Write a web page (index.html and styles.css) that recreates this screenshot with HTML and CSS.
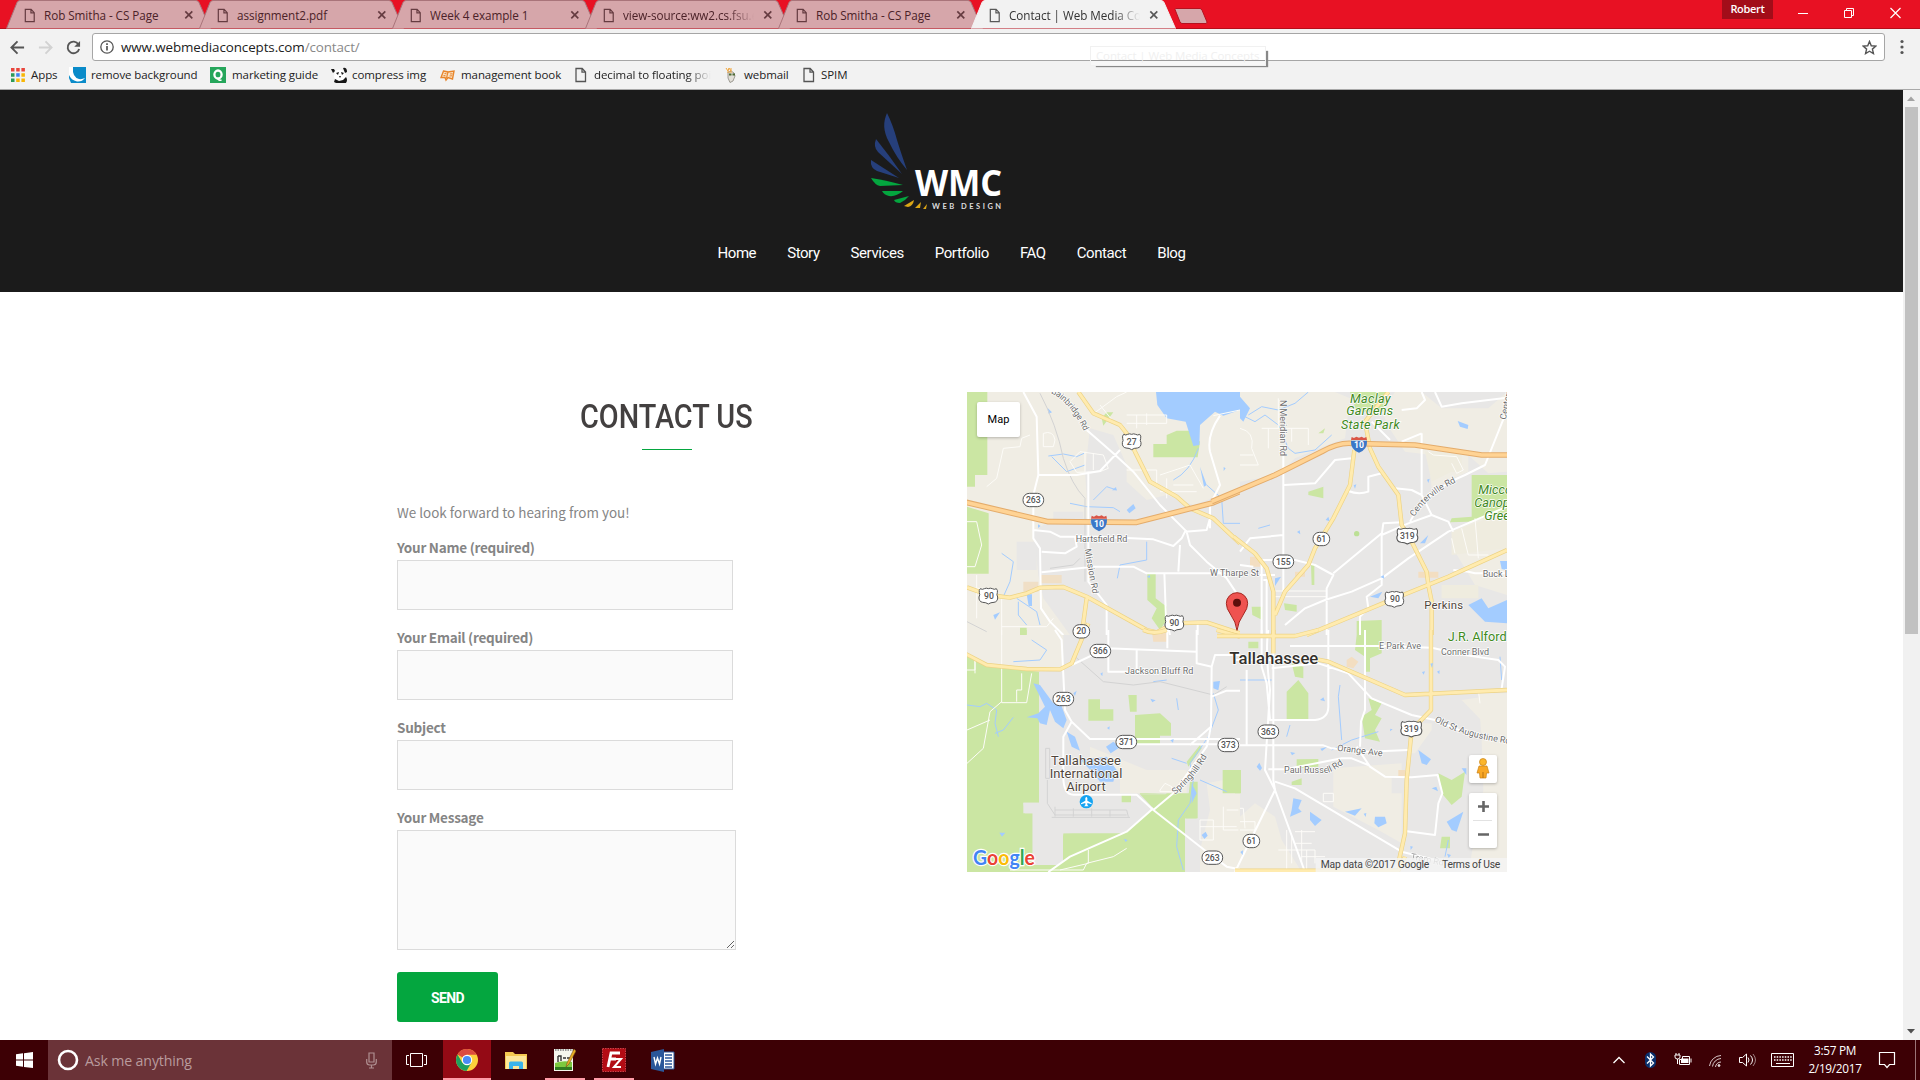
FILE: index.html
```html
<!DOCTYPE html>
<html lang="en">
<head>
<meta charset="utf-8">
<title>Contact | Web Media Concepts</title>
<link rel="stylesheet" href="styles.css">
</head>
<body>
<svg class="defs" width="0" height="0">
  <defs>
    <symbol id="page" viewBox="0 0 12 16"><path d="M1 1.5h6.2L10.5 5v9.5H1zM7 1.5V5.2h3.5" fill="none" stroke="currentColor" stroke-width="1.3"/></symbol>
    <symbol id="close" viewBox="0 0 10 10"><path d="M1.3 1.3l7 7m0-7l-7 7" fill="none" stroke="currentColor" stroke-width="1.7"/></symbol>
    <symbol id="tabshape" viewBox="0 0 206 29"><path d="M.5 28.5L11 2.500Q12 .5 14 .5H190Q192 .5 193 2.500L204.500 28.500" stroke="currentColor"/></symbol>
  </defs>
</svg>
<div class="screen">
  <header class="titlebar">
    <div class="tabs">
      <div class="tab"><svg class="tab-bg"><use href="#tabshape"/></svg><svg class="tab-icon"><use href="#page"/></svg><span class="tab-title">Rob Smitha - CS Page</span><svg class="tab-close"><use href="#close"/></svg></div>
      <div class="tab"><svg class="tab-bg"><use href="#tabshape"/></svg><svg class="tab-icon"><use href="#page"/></svg><span class="tab-title">assignment2.pdf</span><svg class="tab-close"><use href="#close"/></svg></div>
      <div class="tab"><svg class="tab-bg"><use href="#tabshape"/></svg><svg class="tab-icon"><use href="#page"/></svg><span class="tab-title">Week 4 example 1</span><svg class="tab-close"><use href="#close"/></svg></div>
      <div class="tab"><svg class="tab-bg"><use href="#tabshape"/></svg><svg class="tab-icon"><use href="#page"/></svg><span class="tab-title fade">view-source:ww2.cs.fsu.edu</span><svg class="tab-close"><use href="#close"/></svg></div>
      <div class="tab"><svg class="tab-bg"><use href="#tabshape"/></svg><svg class="tab-icon"><use href="#page"/></svg><span class="tab-title">Rob Smitha - CS Page</span><svg class="tab-close"><use href="#close"/></svg></div>
      <div class="tab active"><svg class="tab-bg"><use href="#tabshape"/></svg><svg class="tab-icon"><use href="#page"/></svg><span class="tab-title fade">Contact | Web Media Concepts</span><svg class="tab-close"><use href="#close"/></svg></div>
      <svg class="new-tab" viewBox="0 0 34 16"><path d="M1 1.500Q1 .5 2 .5H26Q27 .5 28 2l5 12q0 1.500-1 1.500H8Q7 15.500 6 14z" fill="#d6a6aa" stroke="#b5121f"/></svg>
    </div>
    <div class="window-controls">
      <span class="profile">Robert</span>
      <svg width="12" height="12" viewBox="0 0 12 12"><path d="M0 6.500h10" stroke="#fff"/></svg>
      <svg width="12" height="12" viewBox="0 0 12 12"><path d="M.5 3.500h7v7h-7zM2.500 3V1.500h7v7H8" fill="none" stroke="#fff"/></svg>
      <svg width="12" height="12" viewBox="0 0 12 12"><path d="M.5 1l10 10m0-10l-10 10" stroke="#fff" stroke-width="1.200"/></svg>
    </div>
  </header>
  <div class="toolbar">
    <svg class="nav-icon" viewBox="0 0 16 16"><path d="M15 8H2M8 1.500L1.500 8 8 14.500" fill="none" stroke="#555" stroke-width="2"/></svg>
    <svg class="nav-icon" viewBox="0 0 16 16"><path d="M1 8h13M8 1.500L14.500 8 8 14.500" fill="none" stroke="#d2d2d2" stroke-width="2"/></svg>
    <svg class="nav-icon" viewBox="0 0 16 16"><path d="M13.200 4.500A6.200 6.200 0 1 0 14 9.500" fill="none" stroke="#555" stroke-width="2"/><path d="M15 1v6.200H8.800z" fill="#555"/></svg>
    <div class="omnibox">
      <svg width="14" height="14" viewBox="0 0 14 14"><circle cx="7" cy="7" r="6.200" fill="none" stroke="#555" stroke-width="1.300"/><path d="M7 6v4.500M7 3.300v1.600" stroke="#555" stroke-width="1.700"/></svg>
      <span class="url">www.webmediaconcepts.com<span>/contact/</span></span>
      <svg class="star" width="15" height="15" viewBox="0 0 16 16"><path d="M8 1.500l1.900 4.600 4.900.4-3.700 3.200 1.100 4.800L8 12l-4.200 2.500 1.100-4.800L1.200 6.500l4.900-.4z" fill="none" stroke="#555" stroke-width="1.500"/></svg>
    </div>
    <svg class="dots" width="4" height="16" viewBox="0 0 4 16"><g fill="#555"><circle cx="2" cy="2.500" r="1.600"/><circle cx="2" cy="8" r="1.600"/><circle cx="2" cy="13.500" r="1.600"/></g></svg>
    <div class="tooltip">Contact | Web Media Concepts</div>
  </div>
  <nav class="bookmarks">
    <span class="bm bm-apps"><svg width="14" height="14" viewBox="0 0 14 14"><path d="M0 0h3.500v3.500H0zM5.200 0h3.500v3.500H5.200zM10.400 0h3.500v3.500h-3.500z" fill="#e8453c"/><path d="M0 5.200h3.500v3.500H0zM0 10.400h3.500v3.500H0z" fill="#2d9a57"/><path d="M5.200 5.200h3.500v3.500H5.200z" fill="#3e82f1"/><path d="M10.400 5.200h3.500v3.500h-3.500zM5.200 10.400h3.500v3.500H5.200zM10.400 10.400h3.500v3.500h-3.500z" fill="#f8b605"/></svg>Apps</span>
    <span class="bm bm-remove"><svg width="17" height="16" viewBox="0 0 17 16"><path d="M0 0h17v16H2L0 11z" fill="#0a8bc9"/><path d="M0 0H4Q3 10 10 12 13 12.500 16 11 13 15 8 14.500 2 13 0 8z" fill="#fff"/></svg>remove background</span>
    <span class="bm bm-guide"><svg width="16" height="16" viewBox="0 0 16 16"><path d="M0 0h16v16H0z" fill="#26a65b"/><ellipse cx="8" cy="7.500" rx="3.600" ry="4" fill="none" stroke="#fff" stroke-width="2.300"/><path d="M7.500 11q1 3 4 2" fill="none" stroke="#fff" stroke-width="1.600"/></svg>marketing guide</span>
    <span class="bm bm-compress"><svg width="17" height="16" viewBox="0 0 17 16"><path d="M4 4q4-3 9 0l2 5-2 5-7 1-3-5z" fill="#fff"/><path d="M0 2l3 0 1 2-2 2zM12 1q4-1 4 4l-2 1zM5 6l3-1-1 3zM10 5l3 1-2 2zM8 9h2l-1 2zM3 15l1-3 4 2 4-1 3-3q2 3 0 6H5z" fill="#171717"/></svg>compress img</span>
    <span class="bm bm-book"><svg width="15" height="15" viewBox="0 0 15 15"><path d="M3.500 3l4.500 1 6-1-1.500 8-4.500-1.500L6 12l-1-2.500H1z" fill="#fbe3c6" stroke="#e8862c" stroke-width="1.400"/><path d="M8 4L6.500 10M10 6l2.500-.3M9.500 8l2.500-.2M4.500 5.500l2 .3M3.500 7.500l2 .2" stroke="#e8862c" stroke-width="1.100"/></svg>management book</span>
    <span class="bm bm-decimal"><svg width="12" height="16"><use href="#page"/></svg><span class="fade">decimal to floating point</span></span>
    <span class="bm bm-mail"><svg width="12" height="16" viewBox="0 0 12 16"><path d="M3 5q4-2 6 1l1 3-2 5-3 1.500L3 11z" fill="#e2dfd8" stroke="#8a867e" stroke-width=".8"/><path d="M1 1l2 3 1-3 2 3V1M2 5h5" stroke="#f0a53a" fill="none"/><path d="M4 7.500h2.500m1 0H10" stroke="#4d6a34" stroke-width="1.800"/></svg>webmail</span>
    <span class="bm bm-spim"><svg width="12" height="16"><use href="#page"/></svg>SPIM</span>
  </nav>

  <div class="viewport">
    <main class="site">
      <div class="site-header">
        <svg class="logo" width="132" height="100" viewBox="0 0 132 100" role="img" aria-label="WMC Web Design">
          <g fill="#263f7b"><path d="M16 0C12 9 12 18 18 29Q25 44 36 57 30 40 26 27 22 12 16 0z"/><path d="M5 26Q2 34 7 39L31 61Q18 42 5 26z"/><path d="M0 47Q-1 55 6 58L28 65 0 47z"/></g>
          <g fill="#04a63f"><path d="M0 65Q4 72 9 73L32 72Q14 67 0 65z"/><path d="M11 78H32Q25 84 18 83 13 82 11 78z"/><path d="M23 87L38 83Q34 88 29 90 24 90 23 87z"/></g>
          <g fill="#dba616"><path d="M33 93L43 87Q42 93 37 94z"/><path d="M44 95L50 89 49 95z"/><path d="M52 96L56 91 55 96z"/></g>
          <text x="44" y="83" class="logo-name" textLength="87" lengthAdjust="spacingAndGlyphs">WMC</text>
          <text x="61" y="96" class="logo-sub" textLength="69">WEB DESIGN</text>
        </svg>
        <nav class="menu"><a>Home</a><a>Story</a><a>Services</a><a>Portfolio</a><a>FAQ</a><a>Contact</a><a>Blog</a></nav>
      </div>
      <div class="columns">
        <section class="contact">
          <h1><span>CONTACT US</span></h1>
          <p>We look forward to hearing from you!</p>
          <form>
            <label>Your Name (required)<input type="text"></label>
            <label>Your Email (required)<input type="text"></label>
            <label>Subject<input type="text"></label>
            <label>Your Message<textarea></textarea></label>
            <button type="button">SEND</button>
          </form>
        </section>
        <section class="map">
          <svg class="map-canvas" width="540" height="480" viewBox="0 0 1620 1440">
            <defs>
              <clipPath id="cnw"><path d="M0 0H840V750H0z"/></clipPath>
              <g id="us"><path d="M-24-22q6 4 12 0 6-3 12 0 6-3 12 0 6 4 12 0 5 5 3 12-3 6 1 13 1 14-11 16-10 0-17 5-7-5-17-5-12-2-11-16 4-7 1-13-2-7 3-12z" fill="#fff" stroke="#555" stroke-width="3"/></g>
              <g id="us3"><use href="#us" transform="scale(1.120 1)"/></g>
              <rect id="st" x="-31" y="-20" width="62" height="40" rx="19" fill="#fff" stroke="#555" stroke-width="3"/>
              <rect id="st2" x="-25" y="-20" width="50" height="40" rx="19" fill="#fff" stroke="#555" stroke-width="3"/>
              <g id="i10"><path d="M-24-11Q-26 15 0 25 26 15 24-11z" fill="#3a77c8"/><path d="M-22-22l7 3 7-4 8 3 8-3 7 4 7-3 2 9h-48z" fill="#da5546"/><text y="12" text-anchor="middle" class="shield white">10</text></g>
              <path id="tBain" d="M272 24Q335 52 382 160"/>
              <path id="tCen" d="M538 396Q580 330 670 288"/>
              <path id="tAug" d="M598 274Q690 325 830 342"/>
              <path id="tPaul" d="M147 428H280Q295 425 345 388"/>
              <path id="tSpr" d="M645 494Q710 440 745 372"/>
            </defs>
            <rect width="1620" height="1440" fill="#e8e7e6"/>

            <!-- north-west quarter -->
            <g transform="translate(-21 -21)" clip-path="url(#cnw)">
              <path d="M21 21H840V310L700 360 620 330 560 345 500 290V240L460 150 390 130 375 260 385 400H280L220 440 235 570 250 640 330 750H21z" fill="#f0ede4"/>
              <path d="M170 470h60v85h-60zM280 380h90v40h-90z" fill="#e8e7e6"/>
              <path d="M21 21H82V270H45V305H21zM21 365L86 385V566H21zM580 177H620V150L650 137H690L720 170 713 217H580zM562 563H587V640L620 665V705L600 735 575 700 590 670 562 645zM425 100L440 82H460L430 122zM180 728h20v22h-20z" fill="#cbe6a3"/>
              <path d="M588 21H840V75L790 92 765 80 720 120 718 180 700 183 677 110 620 100 592 60zM720 245L740 300 732 305zM500 375L520 357 527 370 508 385zM200 628h16v35h-10zM262 68l14 14-10 4zM100 690l20-8-15 22z" fill="#a3ccff"/>
              <g class="stream"><path d="M715 190Q690 260 640 285M740 300L785 340 790 415H840M265 213L310 207 350 215 372 205M275 215L320 260 375 240M330 355L380 365 460 368 480 380M400 345L440 305 470 315M560 470V525L480 540 472 580M125 505L160 530 150 590 130 635M170 640L230 680 240 720M175 650V690L200 720"/></g>
              <path d="M240 570h65v25h-65zM190 590h45v30h-45z" fill="#f0dfc6"/>
              <path d="M240 25Q290 120 310 220 335 300 375 340V590M270 550L340 540 360 520M21 710L80 740" class="rail"/>
              <path d="M840 75L760 92M330 230L360 200 430 210 445 250 420 260 350 262 330 230M375 200V260M400 205V255M250 145q30-10 35 20l-5 20h-30zM395 90L470 35 500 21M420 60L460 110M500 90h120v25h-120M530 90v40M560 85v35M600 270L690 240 730 310M500 255h90v40M620 280V340M21 410L50 410 65 480 45 545 21 545M130 190L180 185 185 160 210 150M130 190L110 280 80 305M50 570V700M21 610H75M125 640V750M125 725H260L280 700M640 300h60M600 320h110" class="minor"/>
              <path d="M190 21L230 95 235 270 220 330V460L240 490 243 670 270 710 310 750M235 270H350L420 258 480 195M385 260V590L440 660V750M380 135L460 205 520 260 600 360 680 440 690 480 740 530 800 580 840 640M220 435L270 440 300 455H420L580 463 640 483 665 460 675 440 740 435 750 400M780 92Q740 150 750 200L780 300 750 360V430M245 500L315 505 350 485 345 455M245 562L400 545H520L560 565H840M660 480L655 560M613 563L618 700 630 750M713 710V750" class="road"/>
              <path d="M355 21L400 85 480 120 500 145 525 200 570 290 650 335 690 370 760 400 840 475M21 607L85 630 150 638 200 625 240 608 310 606 380 635 560 735 590 742 640 715 740 712 840 745M380 640L365 750" class="hwyc"/>
              <path d="M355 21L400 85 480 120 500 145 525 200 570 290 650 335 690 370 760 400 840 475M21 607L85 630 150 638 200 625 240 608 310 606 380 635 560 735 590 742 640 715 740 712 840 745M380 640L365 750" class="hwy"/>
              <path d="M10 350L265 410 530 412 760 353 850 315" class="intc"/><path d="M10 350L265 410 530 412 760 353 850 315" class="int"/>
            </g>

            <!-- north-east quarter -->
            <g transform="translate(804 -21)">
              <path d="M15 21H300L345 40 330 160 290 175 180 220 130 270 15 290zM480 21H560L620 70H760L816 21V260L760 265 700 210H590L510 200 470 140 440 80zM580 200H700V260L590 310zM650 440L816 360V630L720 600 660 500z" fill="#f0ede4"/>
              <path d="M570 200H680V265L650 260 590 290zM650 440L760 400 816 385V490L650 510zM620 600h110v40h-110z" fill="#efecdf"/>
              <path d="M345 21H455L445 80H365zM220 320L265 305V340L220 330zM710 270H816V380L700 410 645 412 650 400 710 395zM365 708L440 705V750H365zM228 540h10v60h-8zM147 655L185 660V680L150 675zM50 665h32v40l-30-15zM250 145l20-15-5 15z" fill="#cbe6a3"/>
              <path d="M15 35L45 70 25 110 15 100zM668 108L700 120 698 132 675 125zM700 660L740 640 760 670 816 645V715L750 710zM555 475L580 450 570 475zM120 580L138 575 120 603zM405 635L442 620 430 640zM272 405l8-10 4 14zM795 528h21v28l-16-4z" fill="#a3ccff"/>
              <circle cx="365" cy="446" r="8" fill="#bce095"/>
              <g class="stream"><path d="M30 95L60 110 90 90 130 120 160 190 180 205 240 195 290 150M40 90L80 65 130 75 180 55 220 21M70 430L105 420"/></g>
              <path d="M45 515h30v30h-30zM180 560h30v15h-30zM550 560h60v18h-60z" fill="#f3dec1"/>
              <path d="M15 130Q60 140 50 190L70 240H15M80 130h140v50M100 130v60M130 40v90M170 130v40M580 200l15 10 70 5 20 40-20 10-15-30M15 210h40M680 430L700 510H760M720 400L730 520M650 460L660 505M118 618H275M118 635H275" class="minor"/>
              <path d="M145 200V620M148 300L240 295 300 225 350 220M340 318Q370 330 400 320V275L440 265M15 500L45 460 145 450M75 525H180L240 540 295 570 275 610V750M295 565L440 445V600L395 635 400 670 375 695V750M500 412L445 415 440 450M440 450L520 415 590 390M525 410Q570 320 690 270L750 240 816 75M410 110L465 165M480 310L530 315 560 330 590 390 640 410 655 440M560 145V330M500 75L545 70 570 45 560 21M600 21L620 65 680 55 816 38M500 170L560 145M150 720L210 670 270 645 350 620 440 580 520 520 640 440 816 365M75 570H120M80 530V750M85 585H95V750M15 540L55 545M655 555L700 560 720 565H816" class="road"/>
              <path d="M-4 455L60 505 95 550 115 620V750M358 195L345 300 295 400 240 490 220 540 150 620 120 690M460 21L390 110 405 190 430 245 490 330 500 420 530 470 575 560 580 600 590 650V750M215 750L480 640 640 575 816 495" class="hwyc"/>
              <path d="M-4 455L60 505 95 550 115 620V750M358 195L345 300 295 400 240 490 220 540 150 620 120 690M460 21L390 110 405 190 430 245 490 330 500 420 530 470 575 560 580 600 590 650V750M215 750L480 640 640 575 816 495" class="hwy"/>
              <path d="M-70 350L120 270 260 200Q310 172 350 175L540 180 740 210H816" class="intc"/><path d="M-70 350L120 270 260 200Q310 172 350 175L540 180 740 210H816" class="int"/>
            </g>

            <!-- south-west quarter -->
            <g transform="translate(-21 714)">
              <path d="M21 15H310V120L237 125H21zM390 350L560 420H680V490H480V440L390 420zM740 460L840 440V726H720V660L750 540z" fill="#f0ede4"/>
              <path d="M21 70L80 110 240 125V518H190V550H218V705H300L310 610 500 605 540 490H710V565H675V726H21z" fill="#cbe6a3"/>
              <path d="M237 125V518H190L195 550H218V705H309V610H490L560 560 620 490 540 493H310V125z" fill="#e8e7e6"/>
              <path d="M540 493H710V565H675V726H265L330 680 500 605 580 535z" fill="#cbe6a3"/>
              <path d="M385 208h35v30h40v34h-75zM505 195h25v50h-20zM525 255L600 250 633 280V317H600V343H525zM788 420h52v70h-52zM485 495h28v22h-28zM680 395l40-50 5 10-40 55zM690 455h23v110h-35zM182 0h18v14h-18z" fill="#cbe6a3"/>
              <path d="M220 160L240 165 280 220 300 215 320 270 310 295 285 275 270 240 260 285 240 280 232 265 200 262 235 250 255 230zM320 305L345 320 360 362 335 350zM438 350L460 335 480 352 452 370zM362 390L440 380 470 420 460 455H420L400 430zM340 190l10-8-5 16zM760 155l20-2-5 28-15-6zM695 460L710 490 695 520zM118 608h18l-10 12zM725 615l12-10 6 12-10 10z" fill="#a3ccff"/>
              <g class="stream"><path d="M21 225L60 230 80 220 110 240 105 280 115 320M160 262L130 300 105 310M760 190L775 240 745 320 690 400 700 450 690 520 655 570 650 650 670 720M650 205L655 240M635 385L680 400M215 30L260 60 240 90 160 95M720 450L800 485M580 155L620 150"/></g>
              <path d="M575 0h45v35h-40z" fill="#f3dec1"/>
              <path d="M257 355h12v90h-12zM262 450V520L285 555H500M285 530V560M340 535V560M395 535V560M450 540V560M285 540H500L505 560M275 562H510M340 75L430 155 520 165 600 155 760 195 800 170" class="rail"/>
              <path d="M125 0V218H200L215 130M125 215L90 245 70 355 21 400M90 270L21 300M170 215V180H185V130M21 120H45V85M45 130V90M150 720H370L380 700 460 680 500 655M385 660V700L300 720M600 480l15-20 20 10v15h-35zM720 570h40v60h-40zM790 530v70h45M720 590h110M800 540h35" class="minor"/>
              <path d="M285 0L305 30 315 240 335 275 390 327H840M335 275L310 320V440Q310 493 340 494H530L580 540 740 665 800 710 840 718M580 535L500 605 330 680 265 726M335 105L440 55 710 65V100L755 110 753 290 740 350 640 490 580 540M445 0V125H530V60M622 0V55M710 65V0M753 290L690 345M530 343H840M755 110L765 75H840M755 200L800 182H840M530 125L600 122" class="road"/>
              <path d="M10 68L80 105 200 117 300 118 335 100 385-20M550 0Q580 15 620 0M770 0L840 20" class="hwyc"/><path d="M10 68L80 105 200 117 300 118 335 100 385-20M550 0Q580 15 620 0M770 0L840 20" class="hwy"/>
              <circle cx="379" cy="515" r="20" fill="#15a4f2"/><path d="M379 500l3 4v8l13 8v3l-13-4v6l4 4h-14l4-4v-6l-13 4v-3l13-8v-8z" fill="#fff"/>
            </g>

            <!-- south-east quarter -->
            <g transform="translate(804 714)">
              <path d="M680 210L816 190V726H700L740 560 816 350zM535 280H590V300L540 370H520zM295 415L500 400V440H470V490H500V640L430 600 295 530zM15 560L60 520 120 560 140 630 200 726H15z" fill="#f0ede4"/>
              <path d="M730 190H816V726H700L745 480 740 330z" fill="#f0ede4"/>
              <path d="M365 15H440V70L405 85V125H390V80L360 60zM155 185L190 150 220 190V268H155zM170 100L205 110V145L180 140zM185 388L250 387V410L185 415zM170 455l30-10v20h-30zM400 205L440 220 420 255 440 265 420 300 435 335 390 325 380 260 410 240zM610 430L650 450 690 425 680 500 650 525 620 490zM0 420h18v70H0zM620 620h25v35h-30zM40 35h30v20h-30z" fill="#cbe6a3"/>
              <path d="M550 360L588 388 575 405 560 400zM175 505L200 510 190 535 200 545 165 560 170 540zM225 545L260 570 240 588 225 570zM420 560L450 560 455 580 430 592 418 580zM330 545l50-10-20 22zM635 575l50-30-20 60-15-5zM65 410l8-12 8 16-6 8zM680 415h14v20zM255 210l10-8 5 12zM590 475l14-5 5 14z" fill="#a3ccff"/>
              <g class="stream"><path d="M315 165L310 200 320 330M290 360L350 330 430 305M165 285L155 320M640 630L630 680M15 150H110M795 80L800 150"/></g>
              <path d="M335 90l15-10 20 15-15 20-20-5zM490 420h20v20h-20z" fill="#f3dec1"/>
              <path d="M130 660h110v40M155 600V726M170 620v80M200 600v100M200 680h70M215 660v60M180 605h60M180 640h50M15 535h10l5 60M15 575h45v25H15M265 490h30v25h-30zM730 180L735 220" class="minor"/>
              <path d="M100 0Q90 60 105 180L90 420 120 480 210 726M120 480L0 726M80 0V110L95 160 105 270H240Q280 265 280 230V0M110 115L250 100 340 130 410 205 530 255 600 270 720 320M165 48H440L590 53 690 75 790 90 810 110 800 175M390 0V240L378 275 375 350M0 346H265L290 355 400 365 520 360M100 418H150L320 385 350 385 400 405M365 350L405 410 450 440 530 442 608 435 622 490 610 520 600 615 510 603M120 455L180 475 500 665 600 690M0 90H110M35 120V346" class="road"/>
              <path d="M115 0V450L120 480" class="road"/>
              <path d="M-54 18H180L250 0M115 0V70M245 88L280 95 510 195 816 180M588 0V240L530 300 515 450 510 610 490 700M0 722H490L510 680" class="hwyc"/>
              <path d="M-54 18H180L250 0M115 0V70M245 88L280 95 510 195 816 180M588 0V240L530 300 515 450 510 610 490 700M0 722H490L510 680" class="hwy"/>
            </g>

            <!-- small ponds -->
            <g fill="#a3ccff"><path d="M435 295l12-10 2 10zM370 385l10 6-8 8zM213 397l8 5-8 6zM540 555l8-6 2 9zM770 225l6 4-6 8zM1160 280l8-3-4 13zM1380 263l8-3-4 13zM1240 555l10-6 2 11zM990 420l8-5 2 12zM550 920l16 5-10 6zM420 1008l8-5-1 10zM610 1045l10-4-2 11zM470 1340l12 4-6 6zM1365 840l9-2-4 10zM1390 815l8-2-3 15zM1410 839l8-4-1 12zM1330 1362l8 2-7 10zM1440 1385l12 4-7 9zM970 1080l15 3-10 7zM1060 1070l20-5-15 12zM1190 1265l8-2-2 12zM820 1380l8-5-1 14zM400 845l7-4-1 12zM1270 1010l7 2-8 6z"/></g>

            <use href="#us" x="494" y="149"/><use href="#us" x="64" y="612"/><use href="#us" x="622" y="693"/><use href="#us" x="1282" y="622"/>
            <use href="#us3" x="1321" y="432"/><use href="#us3" x="1333" y="1011"/>
            <use href="#st" x="199" y="324"/><use href="#st" x="949" y="509"/><use href="#st2" x="1063" y="441"/><use href="#st2" x="343" y="718"/><use href="#st" x="400" y="777"/><use href="#st" x="289" y="921"/><use href="#st" x="478" y="1050"/><use href="#st" x="784" y="1059"/><use href="#st" x="904" y="1019"/><use href="#st2" x="853" y="1347"/><use href="#st" x="736" y="1397"/>
            <use href="#i10" x="396" y="393"/><use href="#i10" x="1176" y="157"/>
            <g class="shield" text-anchor="middle"><text x="494" y="160">27</text><text x="66" y="621">90</text><text x="622" y="702">90</text><text x="1284" y="631">90</text><text x="1321" y="441">319</text><text x="1333" y="1020">319</text><text x="199" y="334">263</text><text x="949" y="519">155</text><text x="1063" y="451">61</text><text x="343" y="727">20</text><text x="400" y="787">366</text><text x="289" y="931">263</text><text x="478" y="1060">371</text><text x="784" y="1069">373</text><text x="904" y="1029">363</text><text x="853" y="1357">61</text><text x="736" y="1407">263</text></g>

            <g class="street">
              <text x="326" y="449" textLength="155">Hartsfield Rd</text><text x="729" y="551" textLength="147">W Tharpe St</text><text x="474" y="847" textLength="205">Jackson Bluff Rd</text>
              <text x="1236" y="771" textLength="126">E Park Ave</text><text x="1422" y="789" textLength="144">Conner Blvd</text><text x="1547" y="555">Buck Lake Rd</text>
              <text transform="translate(353 472) rotate(80)" textLength="136">Mission Rd</text>
              <text transform="translate(938 24) rotate(90)" textLength="168">N Meridian Rd</text>
              <text transform="translate(1616 84) rotate(-78)">Centerville Rd</text>
              <text transform="translate(1110 1076) rotate(7)" textLength="137">Orange Ave</text>
              <text transform="translate(1330 1402) rotate(11)" opacity=".65">Tram Rd</text>
              <g transform="translate(-21 -21)"><text class="tight"><textPath href="#tBain">Bainbridge Rd</textPath></text></g>
              <g transform="translate(804 -21)"><text><textPath href="#tCen">Centerville Rd</textPath></text></g>
              <g transform="translate(804 714)"><text><textPath href="#tAug">Old St Augustine Rd</textPath></text><text><textPath href="#tPaul">Paul Russell Rd</textPath></text></g>
              <g transform="translate(-21 714)"><text><textPath href="#tSpr">Springhill Rd</textPath></text></g>
            </g>
            <g class="park"><g text-anchor="middle"><text x="1210" y="32" textLength="122">Maclay</text><text x="1208" y="70" textLength="140">Gardens</text><text x="1210" y="110" textLength="176">State Park</text></g><text x="1534" y="307">Miccosukee</text><text x="1522" y="346">Canopy</text><text x="1552" y="385">Greenway</text><text class="upright" x="1442" y="748">J.R. Alford</text></g>
            <g class="place"><text x="1372" y="650" textLength="116">Perkins</text><g text-anchor="middle" class="airport"><text x="357" y="1120" textLength="210">Tallahassee</text><text x="357" y="1159" textLength="218">International</text><text x="357" y="1198" textLength="118">Airport</text></g><text class="city" x="787" y="815" textLength="267" lengthAdjust="spacingAndGlyphs">Tallahassee</text></g>

            <path d="M810 715Q807 690 790 666 778 650 778 634A32 32 0 0 1 842 634Q842 650 830 666 813 690 810 715z" fill="#ef5350" stroke="#a52720" stroke-width="3"/><circle cx="810" cy="632" r="12" fill="#5d0f0c"/>
            <path d="M1046 1398H1620V1440H1046z" fill="#f5f5f5" opacity=".78"/>
            <g class="legal"><text x="1061" y="1427" textLength="326">Map data ©2017 Google</text><text x="1425" y="1427" textLength="175">Terms of Use</text></g>
            <text class="google" x="18" y="1419" textLength="186" lengthAdjust="spacingAndGlyphs"><tspan fill="#4285f4">G</tspan><tspan fill="#ea4335">o</tspan><tspan fill="#fbbc05">o</tspan><tspan fill="#4285f4">g</tspan><tspan fill="#34a853">l</tspan><tspan fill="#ea4335">e</tspan></text>
          </svg>
          <div class="map-type">Map</div>
          <div class="pegman"><svg width="14" height="22" viewBox="0 0 14 22"><circle cx="7" cy="4" r="3.500" fill="#fbb62c" stroke="#c98216" stroke-width=".7"/><path d="M3 8h8l2 7h-2.500l-.5 5H4l-.5-5H1z" fill="#f9a825" stroke="#c98216" stroke-width=".7"/><path d="M7 14v6" stroke="#b97312"/></svg></div>
          <div class="zoom"><svg width="28" height="55" viewBox="0 0 28 55"><path d="M9 13.500h11M14.500 8v11M9 41.500h11" stroke="#666" stroke-width="2.600"/><path d="M4 27.500h19" stroke="#e2e2e2"/></svg></div>
        </section>
      </div>
    </main>
    <div class="scrollbar"><svg width="17" height="17" viewBox="0 0 17 17"><path d="M4 11h8L8 6.500z" fill="#a3a3a3"/></svg><div class="thumb"></div><svg width="17" height="17" viewBox="0 0 17 17"><path d="M4 6h8L8 10.500z" fill="#505050"/></svg></div>
  </div>

  <footer class="taskbar">
    <div class="start"><svg width="17" height="16" viewBox="0 0 17 16"><path d="M0 2.300L7 1.300V7.600H0zM8 1.200L17 0V7.600H8zM0 8.500H7V14.800L0 13.800zM8 8.500H17V16L8 14.900z" fill="#fff"/></svg></div>
    <div class="search"><svg width="22" height="22" viewBox="0 0 22 22"><circle cx="11" cy="11" r="9" fill="none" stroke="#fff" stroke-width="2.600"/></svg><span>Ask me anything</span><svg width="11" height="17" viewBox="0 0 11 17"><path d="M3 1h5v9H3zM.7 7v3q0 3 3 3h3.600q3 0 3-3V7M5.500 13v3M3 16h5" fill="none" stroke="#b08f91" stroke-width="1.200"/></svg></div>
    <div class="task view"><svg width="21" height="14" viewBox="0 0 21 14"><path d="M4.500.5h12v13h-12zM3 2.500H.5v9H3M18 2.500h2.500v9H18" fill="none" stroke="#fff"/></svg></div>
    <div class="task current"><svg width="22" height="22" viewBox="0 0 22 22"><circle cx="11" cy="11" r="11" fill="#fdd03b"/><path d="M11 11L1.500 5.500A11 11 0 0 1 20.600 5.700H11z" fill="#dd4b3e"/><path d="M1.500 5.500A11 11 0 0 0 10.500 22L15.500 13.600 6.300 13.700z" fill="#1fa05d"/><circle cx="11" cy="11" r="5.200" fill="#fff"/><circle cx="11" cy="11" r="4.100" fill="#4a8bf5"/></svg></div>
    <div class="task"><svg width="22" height="19" viewBox="0 0 22 19"><path d="M0 1h8l2 2h12v15H0z" fill="#f5c951"/><path d="M1 5h20v13H1z" fill="#fde79a"/><path d="M4 18v-6q0-1.500 1.500-1.500h11Q18 10.500 18 12v6h-4v-3H8v3z" fill="#3bb4ea"/></svg></div>
    <div class="task open"><svg width="22" height="24" viewBox="0 0 22 24"><path d="M0 1h19v22H0z" fill="#f5f7ee"/><path d="M1 15q8-3 17-1v8H1z" fill="#7cc93f"/><path d="M1 19h17v3H1z" fill="#2f7b20"/><path d="M1 2h18" stroke="#999" stroke-dasharray="1.500 1" stroke-width="2"/><path d="M4 8v6M4 8h3v5M9 10h3M13 10h3" fill="none" stroke="#333" stroke-width="1.400"/><path d="M20 1L13 15l-1 4 3-3 7-13z" fill="#e8ad25" stroke="#76501a" stroke-width=".6"/></svg></div>
    <div class="task open"><svg width="24" height="24" viewBox="0 0 24 24"><path d="M.5.5h23v23H.5z" fill="#b30c14" stroke="#d04048" stroke-dasharray="1.500 1"/><path d="M6 19L9 5h9M7 11h7" fill="none" stroke="#fff" stroke-width="2.800"/><path d="M12 11h7l-7 8h7" fill="none" stroke="#fff" stroke-width="2"/></svg></div>
    <div class="task"><svg width="24" height="23" viewBox="0 0 24 23"><path d="M10 3h13v17H10z" fill="#fff" stroke="#2b579a"/><path d="M14 6h7M14 9h7M14 12h7M14 15h7M14 18h7" stroke="#2b579a" stroke-width="1.300"/><path d="M0 3L13 0v23L0 20z" fill="#2b579a"/><path d="M3 8l1.500 7L6.500 9l2 6L10 8" fill="none" stroke="#fff" stroke-width="1.400"/></svg></div>
    <div class="tray">
      <svg width="302" height="40" viewBox="0 0 302 40" fill="none" stroke="#fff">
        <path d="M3.500 23l5.500-5.500 5.500 5.500" stroke-width="1.300"/>
        <rect x="35" y="12" width="11" height="16" rx="5.500" fill="#0a2f6b" stroke="none"/><path d="M37 16.500l6.500 6.500-3 3V14l3 3-6.500 6.500" stroke-width="1.300"/>
        <path d="M69.500 24.500v-5h3v-3h7v8zM81 18.500v4"/><path d="M71 18.500h7.500v4.500H71z" fill="#fff" stroke="none"/><path d="M65 15h5v2q0 2-2.500 2T65 17zM67.500 19v5M66 13v2M69 13v2"/>
        <g stroke="#d8c7c8"><path d="M99.500 26A12 12 0 0 1 111 15.500M102.500 26.500A9 9 0 0 1 111 18.500M105.500 27a5.500 5.500 0 0 1 5.500-5"/><circle cx="109" cy="25.500" r="1" fill="#fff"/></g>
        <path d="M129.500 17.500h3l4-3.500v12l-4-3.500h-3z"/><path d="M138 17.500q2 2.500 0 5M140.500 15.500q4 4.500 0 9"/><path d="M143 14q5 6 0 12" opacity=".5"/>
        <path d="M161.500 13.500h22v13h-22z"/><path d="M164 17h18M164 20h18" stroke-dasharray="1.500 1.200" stroke-width="1.300"/><path d="M166 23.500h14"/>
        <path d="M269.500 12.500h15v12h-5l-2.500 3-2.500-3h-5z" stroke-width="1.200"/>
      </svg>
      <div class="clock"><span>3:57 PM</span><span>2/19/2017</span></div>
    </div>
  </footer>
</div>
</body>
</html>
```
FILE: styles.css
```css
* { box-sizing: border-box; }
body { margin: 0; overflow: hidden; background: #fff; }
.defs { position: absolute; }
.screen { width: 1920px; height: 1080px; display: flex; flex-direction: column; font: 11.5px/16px "Open Sans", "Noto Sans", sans-serif; letter-spacing: -0.12px; color: #222; }
.screen svg { flex: none; }

.titlebar { height: 29px; background: #e81123; display: flex; justify-content: space-between; border-bottom: 1px solid #b50d1a; }
.tabs { display: flex; padding-left: 6px; height: 29px; }
.tab { position: relative; width: 206px; height: 29px; margin-right: -13px; padding: 1px 17px 0 18px; display: flex; align-items: center; color: #4b2228; }
.tab-bg { position: absolute; left: 0; top: 0; width: 206px; height: 29px; fill: #d6a6aa; color: #a9747a; }
.tab.active { z-index: 2; color: #333; }
.tab.active .tab-bg { fill: #f2f2f2; color: #f2f2f2; }
.tab-icon, .tab-title, .tab-close { position: relative; }
.tab-icon { width: 12px; height: 15px; opacity: .8; }
.tab-title { margin-left: 8px; width: 131px; white-space: nowrap; overflow: hidden; font-size: 11.7px; letter-spacing: -0.05px; }
.tab-close { width: 10px; height: 10px; margin-left: 9px; opacity: .8; }
.fade { overflow: hidden; white-space: nowrap; mask-image: linear-gradient(90deg, #000 80%, transparent); }
.new-tab { width: 34px; height: 16px; margin: 8px 0 0 10px; }
.window-controls { display: flex; align-items: flex-start; gap: 34px; padding-right: 18px; }
.window-controls svg { margin-top: 7px; }
.profile { width: 51px; height: 19px; margin-right: -9px; background: #a20d19; color: #fff; text-align: center; line-height: 18px; font-size: 11px; font-weight: 600; letter-spacing: -0.3px; }

.toolbar { position: relative; height: 34px; background: #f2f2f2; display: flex; align-items: center; padding: 4px 16px 2px 10px; gap: 13px; }
.nav-icon { width: 15px; height: 15px; }
.omnibox { flex: 1; margin-left: -2px; height: 28px; border: 1px solid #a6a6a6; border-radius: 3px; background: #fff; display: flex; align-items: center; padding: 0 7px; gap: 7px; }
.url { flex: 1; font-size: 13.4px; letter-spacing: -0.1px; color: #222; }
.url span { color: #888; }
.dots { margin-left: 2px; }
.tooltip { position: absolute; left: 1090px; top: 17px; width: 176px; height: 20px; border: 1px solid #f1f1f1; box-shadow: 4px 3px 1px -2px #888; padding-left: 5px; line-height: 18px; color: #f0f0f0; white-space: nowrap; background: linear-gradient(#fff 70%, #999 70%, #999 76%, #f7f7f7 76%); }
.bookmarks { height: 27px; background: #f2f2f2; border-bottom: 1px solid #a9a9a9; display: flex; align-items: center; padding: 0 0 2px 11px; }
.bm { display: flex; align-items: center; gap: 6px; white-space: nowrap; color: #222; letter-spacing: -0.08px; }
.bm svg { color: #555; }
.bm-apps { width: 58px; }
.bm-remove { width: 141px; gap: 5px; }
.bm-guide { width: 121px; }
.bm-compress { width: 109px; gap: 4px; }
.bm-book { width: 135px; }
.bm-decimal { width: 150px; gap: 7px; }
.bm-decimal .fade { width: 117px; }
.bm-mail { width: 78px; gap: 7px; }

.viewport { flex: 1; min-height: 0; display: flex; }
.site { flex: 1; overflow: hidden; background: #fff; }
.site-header { height: 202px; background: #1b1b1b; display: flex; flex-direction: column; align-items: center; padding-top: 23px; }
.logo { margin-right: 30px; width: 132px; height: 100px; overflow: visible; }
.logo-name { font: bold 35px "Open Sans", sans-serif; fill: #fff; }
.logo-sub { font: bold 7.5px Lato, sans-serif; fill: #ddd; }
.menu { display: flex; gap: 31px; margin-top: 30px; font: 400 15px/20px Roboto, sans-serif; letter-spacing: -0.42px; color: #fff; }
.columns { display: grid; grid-template-columns: 540px 540px; gap: 30px; padding: 100px 0 0 397px; }
.contact { font: 13.450px/20px "Noto Sans CJK JP", sans-serif; letter-spacing: 0; color: #858585; }
h1 { margin: 0; height: 58px; display: flex; flex-direction: column; align-items: center; font: 500 33.500px/50px Roboto, sans-serif; color: #434040; }
h1 span { transform: scaleX(.86); white-space: nowrap; margin-right: 2px; }
h1::after { content: ""; width: 50px; height: 1px; margin-top: 7px; background: #04a63f; flex: none; }
.contact p { margin: 52px 0 14px; }
label { display: block; font-weight: 700; font-size: 13.500px; line-height: 22px; height: 90px; letter-spacing: -0.24px; }
label:last-of-type { height: 166px; }
input, textarea { display: block; width: 336px; height: 50px; border: 1px solid #dbdbdb; background: #fafafa; padding: 0; border-radius: 0; margin: 2px 0 0; }
textarea { width: 339px; height: 120px; resize: both; }
button { width: 101px; height: 50px; border: 0; border-radius: 3px; background: #04a63f; color: #fff; font: 700 14px Roboto, sans-serif; letter-spacing: -0.6px; padding: 1px 0 0; }

.map { position: relative; height: 480px; }
.map-canvas { display: block; letter-spacing: 0; }
.map-type, .pegman, .zoom { position: absolute; background: #fff; border-radius: 2px; box-shadow: 0 1px 3px rgba(0,0,0,.25); }
.map-type { left: 10px; top: 10px; width: 43px; height: 35px; font: 400 11px/35px Roboto, sans-serif; letter-spacing: 0; text-align: center; color: #000; }
.pegman { right: 10px; top: 363px; width: 28px; height: 28px; display: grid; place-items: center; }
.zoom { right: 10px; top: 401px; width: 28px; height: 55px; }
.road, .minor, .hwy, .hwyc, .int, .intc, .rail { fill: none; stroke-linejoin: round; }
.road { stroke: #fff; stroke-width: 6; }
.minor { stroke: #fdfcf8; stroke-width: 3; }
.hwyc { stroke: #edd384; stroke-width: 13; }
.hwy { stroke: #ffebaf; stroke-width: 9; }
.intc { stroke: #e4ac6b; stroke-width: 17; }
.int { stroke: #ffd394; stroke-width: 11; }
.rail { stroke: #d3d3d3; stroke-width: 3; }
.stream { fill: none; stroke: #a3ccff; stroke-width: 3; }
.shield { font: 500 26px Roboto, sans-serif; fill: #555; }
.white { fill: #fff; font-weight: 700; }
.street { font: 27px Roboto, sans-serif; fill: #6c6c6c; stroke: #fff; stroke-width: 4; paint-order: stroke; }
.tight { font-size: 26px; letter-spacing: -0.5px; }
.park { font: italic 400 38px Roboto, sans-serif; fill: #40891c; stroke: #fff; stroke-width: 4; paint-order: stroke; }
.upright { font-style: normal; }
.place { font: 34px Roboto, sans-serif; fill: #50453b; stroke: #fff; stroke-width: 4; paint-order: stroke; }
.airport { font-size: 39px; }
.city { font-size: 48px; font-weight: 500; fill: #33302c; }
.legal { font: 31px Roboto, sans-serif; fill: #444; }
.google { font: bold 62px Lato, sans-serif; stroke: #fff; stroke-width: 7; paint-order: stroke; }

.scrollbar { width: 17px; background: #f1f1f1; display: flex; flex-direction: column; }
.thumb { width: 13px; margin: 0 2px auto; height: 527px; background: #c1c1c1; }

.taskbar { height: 40px; background: #3d0005; display: flex; }
.start { width: 48px; display: grid; place-items: center; }
.search { width: 344px; background: #6b3338; display: flex; align-items: center; padding: 0 15px 0 9px; gap: 6px; font-size: 14.200px; letter-spacing: -0.15px; color: #b99b9d; }
.search span { flex: 1; padding-top: 2px; }
.task { width: 49px; display: grid; place-items: center; position: relative; }
.view { width: 48px; margin-right: 3px; }
.task.current { width: 48px; background: #940a15; }
.task.open::after, .task.current::after { content: ""; position: absolute; bottom: 0; left: 5px; right: 4px; height: 2px; background: #ff9ca8; }
.task.current::after { left: 0; right: 0; }
.tray { margin-left: auto; width: 310px; position: relative; }
.tray::after { content: ""; position: absolute; right: 4px; top: 0; height: 40px; width: 1px; background: #9c7477; }
.clock { position: absolute; left: 195px; top: 1px; width: 60px; display: flex; flex-direction: column; align-items: center; font-size: 11.800px; line-height: 18px; letter-spacing: -0.3px; color: #fff; }
```
